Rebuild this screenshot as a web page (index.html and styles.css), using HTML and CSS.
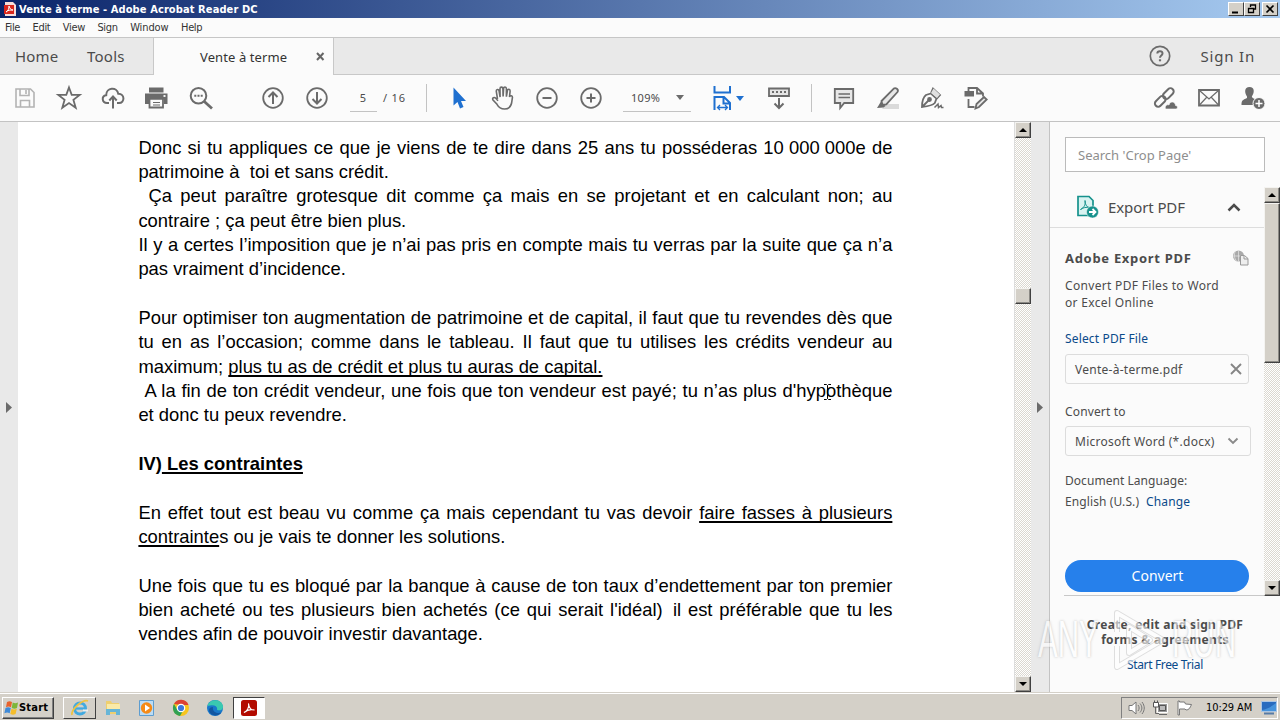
FILE: index.html
```html
<!DOCTYPE html>
<html lang="en">
<head>
    <meta charset="UTF-8">
    <meta name="viewport" content="width=device-width, initial-scale=1.0">
    <title>Vente à terme - Adobe Acrobat Reader DC</title>
    <link rel="stylesheet" href="styles.css">
</head>
<body>
    <div class="window">

        <!-- Title bar -->
        <div class="title-bar">
            <svg class="title-icon" width="12" height="14" viewBox="0 0 12 14"><path d="M1 0h8l3 3v11H1z" fill="#f7dedb"/><path d="M0 3h10v9H0z" fill="#d9271d"/><path d="M2 10c2-1 3-3 3-6 1 3 2 4 4 4-3 0-5 0-7 2z" fill="none" stroke="#fff"/></svg>
            <span class="title-text">Vente à terme - Adobe Acrobat Reader DC</span>
            <div class="win-buttons">
                <span class="win-btn"><svg width="14" height="12"><path d="M3 9.500h6" stroke="#000" stroke-width="2"/></svg></span>
                <span class="win-btn"><svg width="14" height="12"><path d="M5.500 4V2h5v4H9M5 2h6" fill="none" stroke="#000" stroke-width="1.300"/><path d="M3.500 5.500h5v4h-5zM3 5.500h6" fill="none" stroke="#000" stroke-width="1.300"/></svg></span>
                <span class="win-btn close"><svg width="14" height="12"><path d="M3.500 2.500l7 7M10.500 2.500l-7 7" stroke="#000" stroke-width="1.700"/></svg></span>
            </div>
        </div>

        <div class="menu-bar">
            <span>File</span><span>Edit</span><span>View</span><span>Sign</span><span class="wide">Window</span><span>Help</span>
        </div>

        <!-- Tabs -->
        <div class="tab-bar">
            <div class="tab-left">
                <span class="tab-home">Home</span>
                <span class="tab-tools">Tools</span>
            </div>
            <div class="tab-active">
                <span class="tab-name">Vente à terme</span>
                <svg width="9" height="9" viewBox="0 0 9 9"><path d="M1 1l6.500 7M7.500 1L1 8" stroke="#666" stroke-width="2"/></svg>
            </div>
            <div class="tab-right">
                <svg width="22" height="22" viewBox="0 0 22 22" fill="none" stroke="#6b6b6b" stroke-width="1.700"><circle cx="11" cy="11" r="9.700"/><path d="M8.300 8.500c.2-3.300 5.500-3 5.200.2-.2 1.900-2.500 2-2.500 4.100" stroke-width="2"/><path d="M11 14.300v2" stroke-width="2.200"/></svg>
                <span class="sign-in">Sign In</span>
            </div>
        </div>

        <!-- Toolbar -->
        <div class="toolbar">
            <span class="tool light"><svg viewBox="0 0 28 28"><path d="M5 5h14.500l3.500 3.500V23H5zM9 5v6.500h9V5M9.500 23v-6.500h9V23M15 6v4" stroke-width="1.600"/></svg></span>
            <span class="tool"><svg viewBox="0 0 28 28"><path d="M14 3.500l2.700 7.400h8l-6.300 4.900 2.300 7.900-6.700-4.700-6.700 4.700 2.300-7.900-6.300-4.900h8z"/></svg></span>
            <span class="tool"><svg viewBox="0 0 28 28"><path d="M10 19H8c-5 0-6-7-.8-7.800C7 3.500 18 2.300 19.300 9.800 26 9.500 26 19 20 19h-2M14 24.500V13M10.300 16.500L14 12.500l3.700 4" stroke-width="2"/></svg></span>
            <span class="tool"><svg viewBox="0 0 28 28"><path d="M6 3.500h14.500v5H6z" fill="#6b6b6b" stroke="none"/><path d="M2 9.500h22.500V20H21v-4.500H6V20H2z" fill="#6b6b6b" stroke="none"/><path d="M6.500 14.800h13.500v8.700H6.500z" fill="#fbfbfb"/><path d="M10 18.500h7M10 21h7" stroke-width="1"/><path d="M20.500 12h2" stroke="#fff"/></svg></span>
            <span class="tool"><svg viewBox="0 0 28 28"><circle cx="11.500" cy="11.800" r="7.800" stroke-width="2"/><path d="M17 17.300l8 7.200" stroke-width="2.800"/><path d="M7.300 11.800h2M10.500 11.800h2M13.700 11.800h2" stroke-width="1.900"/></svg></span>
            <span class="gap"></span>
            <span class="tool"><svg viewBox="0 0 28 28"><circle cx="14" cy="14" r="9.800"/><path d="M14 20V9M9.500 13L14 8.500l4.500 4.500" stroke-width="2"/></svg></span>
            <span class="tool"><svg viewBox="0 0 28 28"><circle cx="14" cy="14" r="9.800"/><path d="M14 8v11M9.500 15l4.500 4.500 4.500-4.500" stroke-width="2"/></svg></span>
            <span class="page-box"><span class="page-num">5</span><span class="page-total">/ 16</span></span>
            <span class="divider"></span>
            <span class="tool"><svg viewBox="0 0 28 28"><path d="M8.500 3.500v18l4-3.500 2.500 6.500 3.500-1.500-2.500-6h5z" fill="#1f70d0" stroke="none"/></svg></span>
            <span class="tool"><svg viewBox="0 0 28 28"><path d="M8.500 15L7.300 7.500c-.3-2.400 2.400-2.700 2.800-.5l1 6L11 4.800c0-2.200 2.800-2.200 2.900 0l.2 7.700.5-8c.1-2.100 2.800-2 2.800.2v8l1-6c.4-2.200 2.800-1.700 2.700.4l-.6 5.900c.6-2 3.200-1.500 2.900.7L22.600 19c-.8 4-3.500 6-7.100 6-4 0-6-2-7.500-4.700L4 16c-1.200-2.200 1.300-3.400 2.800-1.700l2.200 2.500" stroke-width="1.600"/></svg></span>
            <span class="tool"><svg viewBox="0 0 28 28"><circle cx="14" cy="14" r="9.800"/><path d="M9.500 14h9" stroke-width="2"/></svg></span>
            <span class="tool"><svg viewBox="0 0 28 28"><circle cx="14" cy="14" r="9.800"/><path d="M9.500 14h9M14 9.500v9" stroke-width="2"/></svg></span>
            <span class="zoom-box"><span>109%</span><i class="caret"></i></span>
            <span class="fit-box"><svg viewBox="0 0 28 28" fill="none" stroke="#1f70d0" stroke-width="2"><path d="M6.500 2v6.500h15.500V2M6.500 26V13h9.500l6 6V26M15.500 13v6.500h7"/><path d="M9.500 23.500h10M12 21l-2.500 2.500L12 26M17 21l2.500 2.500L17 26" stroke-width="1.300"/></svg><i class="caret blue"></i></span>
            <span class="tool"><svg viewBox="0 0 28 28"><path d="M4 4.500h20v7.500H4z" fill="#e4e4e4"/><path d="M7 8h2M11 8h2M15 8h2M19 8h2" stroke-width="2"/><path d="M14 14v10M9.500 19.500L14 24l4.500-4.500" stroke-width="2"/></svg></span>
            <span class="divider second"></span>
            <span class="tool"><svg viewBox="0 0 28 28"><path d="M4.800 5h18.400v14h-9l-4 5v-5H4.800z" fill="#e7e7e7"/><path d="M8.500 10h11.500M8.500 13.500h11.500" stroke-width="1.300"/></svg></span>
            <span class="tool"><svg viewBox="0 0 28 28"><path d="M12 20h13v5H8z" fill="#dadada" stroke="none"/><path d="M7.500 17L19.500 4.800c2.200-1.800 5.500.8 4 3.200L12.300 20.300l-4 .7z" fill="#e7e7e7"/><path d="M7 17.500l4.500 4.500-2 1.500-6.500.5z" fill="#6b6b6b" stroke="none"/></svg></span>
            <span class="tool"><svg viewBox="0 0 28 28"><path d="M4 23c0-5 .7-9.500 4-12l5-1.500 5.500 5-1.700 4.500C14 22 8.500 22.500 4 23zM13 9l2-4.500L22 11l-3.500 4M4.500 22.500l6-6"/><path d="M15.500 4.500l6.500 6-3 3.500-6-5z" fill="#e0e0e0" stroke="none"/><circle cx="11.500" cy="15.500" r="1.500" fill="#6b6b6b"/><path d="M16.500 23.500l3.500-3.500.5 3.500 2.500-2 .5 2h2" stroke-width="1.500"/></svg></span>
            <span class="tool"><svg viewBox="0 0 28 28"><path d="M2.500 7h9.500v5.500H2.500z" fill="#6b6b6b" stroke="none"/><path d="M6.500 7V4H15l6 5.500v3M15 4v5.500h6M6.500 15v8h6"/><path d="M13.500 24.500l1-4.500 7.500-7 2.700 2.500-7.700 7.500z" fill="#e7e7e7"/></svg></span>

            <div class="tools-right">
                <span class="tool"><svg viewBox="0 0 28 28"><g stroke-width="2"><rect x="11.500" y="6" width="12.500" height="6.500" rx="3.200" transform="rotate(-45 18 10)"/><rect x="3" y="13.500" width="12.500" height="6.500" rx="3.200" transform="rotate(-45 10 17)"/></g><path d="M14.500 25c-1-3 1.500-5 3.500-4 1-4.500 6.500-3.500 6.500.5 2.500 0 2.500 3.500.5 3.500z" fill="#6b6b6b" stroke="#fbfbfb" stroke-width=".6"/></svg></span>
                <span class="tool"><svg viewBox="0 0 28 28"><path d="M4 6h20v15.500H4z"/><path d="M4.500 6.500L14 15l9.500-8.500M4.500 21l7-7.500M23.500 21l-7-7.500" stroke-width="1.200"/></svg></span>
                <span class="tool"><svg viewBox="0 0 28 28"><path d="M10.500 3c5.500 0 5 6 2.300 9.500.5 2 3 2 4.200 3L14 21H2.500c0-4.500 1-5 5.500-7V12.500C5.500 9 5 3 10.500 3z" fill="#6b6b6b" stroke="none"/><circle cx="20" cy="19.500" r="6" fill="#6b6b6b" stroke="#fbfbfb" stroke-width="1"/><path d="M20 16v7M16.500 19.500h7" stroke="#fff" stroke-width="1.500"/></svg></span>
            </div>
        </div>

        <!-- Document and side panel -->
        <div class="content">
            <div class="strip strip-left"><svg width="6" height="11"><path d="M0 0l6 5.500L0 11z" fill="#6b6b6b"/></svg></div>

            <div class="document">
                <div class="line full">Donc si tu appliques ce que je viens de te dire dans 25 ans tu posséderas <span class="amount">10 000 000e</span> de</div>
                <div class="line">patrimoine à&nbsp; toi et sans crédit.</div>
                <div class="line full"><span class="indent"></span>Ça peut paraître grotesque dit comme ça mais en se projetant et en calculant non; au</div>
                <div class="line">contraire ; ça peut être bien plus.</div>
                <div class="line full">Il y a certes l’imposition que je n’ai pas pris en compte mais tu verras par la suite que ça n’a</div>
                <div class="line">pas vraiment d’incidence.</div>
                <div class="line"></div>
                <div class="line full">Pour optimiser ton augmentation de patrimoine et de capital, il faut que tu revendes dès que</div>
                <div class="line full">tu en as l’occasion; comme dans le tableau. Il faut que tu utilises les crédits vendeur au</div>
                <div class="line">maximum; <u>plus tu as de crédit et plus tu auras de capital.</u></div>
                <div class="line full"><span class="indent short"></span>A la fin de ton crédit vendeur, une fois que ton vendeur est payé; tu n’as plus d'hyp<span class="cursor-spot"><svg class="cursor" width="9" height="16"><path d="M1 .5h2.500l1 1 1-1H8M4.500 1.500v13M1 15.500h2.500l1-1 1 1H8" fill="none" stroke="#000"/></svg></span>othèque</div>
                <div class="line">et donc tu peux revendre.</div>
                <div class="line"></div>
                <div class="line heading">IV)<u> Les contraintes</u></div>
                <div class="line"></div>
                <div class="line full">En effet tout est beau vu comme ça mais cependant tu vas devoir <u>faire fasses à plusieurs</u></div>
                <div class="line"><u>contrainte</u>s ou je vais te donner les solutions.</div>
                <div class="line"></div>
                <div class="line full">Une fois que tu es bloqué par la banque à cause de ton taux d’endettement par ton premier</div>
                <div class="line full">bien acheté ou tes plusieurs bien achetés (ce qui serait <span class="amount">l'idéal)&nbsp; il</span> est préférable que tu les</div>
                <div class="line">vendes afin de pouvoir investir davantage.</div>
            </div>

            <div class="scrollbar doc-scroll">
                <span class="sb-btn"><i class="up"></i></span>
                <span class="sb-thumb"></span>
                <span class="sb-btn"><i class="down"></i></span>
            </div>

            <div class="strip strip-right"><svg width="6" height="11"><path d="M0 0l6 5.500L0 11z" fill="#6b6b6b"/></svg></div>

            <div class="side-panel">
                <div class="search">Search 'Crop Page'</div>
                <div class="panel-area">
                    <div class="panel-main">
                        <div class="panel-head">
                            <svg width="24" height="24" viewBox="0 0 24 24"><path d="M3 1.500h11l4 4V20.500H3z" fill="#d8f3f1" stroke="#16918c" stroke-width="1.700"/><path d="M5.500 14.500c4-2 5-5 4.500-9C10.500 10.500 12 12.500 15 12.500c-4-.5-7 0-9.500 2z" fill="none" stroke="#16918c"/><circle cx="17.500" cy="17" r="6" fill="#16918c" stroke="#fbfbfb" stroke-width=".5"/><path d="M14 17h6M17.500 14l3 3-3 3" fill="none" stroke="#fff" stroke-width="1.800"/></svg>
                            <span class="panel-title">Export PDF</span>
                            <svg class="chevron" width="14" height="9"><path d="M1.500 7.500L7 2l5.500 5.500" fill="none" stroke="#4b4b4b" stroke-width="2.500"/></svg>
                        </div>
                        <div class="panel-body">
                            <div class="export-title"><span>Adobe Export PDF</span>
                                <svg width="17" height="16" viewBox="0 0 17 16"><circle cx="6.500" cy="6" r="5.500" fill="#aaa"/><path d="M1 6h11M6.500.5v11M3.500.8c-2 4-1 8 1 10" stroke="#e8e8e8" fill="none" stroke-width=".7"/><path d="M8.500 5.500h4l3.500 3V15H8.500z" fill="#eee" stroke="#999"/><path d="M12 6v3h4" fill="none" stroke="#999"/></svg>
                            </div>
                            <p class="export-text">Convert PDF Files to Word<br>or Excel Online</p>
                            <div class="link select-link">Select PDF File</div>
                            <div class="field file-field"><span>Vente-à-terme.pdf</span><svg width="12" height="12"><path d="M1 1l10 10M11 1L1 11" stroke="#858585" stroke-width="1.900"/></svg></div>
                            <div class="label">Convert to</div>
                            <div class="field format-field"><span>Microsoft Word (*.docx)</span><svg width="12" height="8"><path d="M1.500 1.500L6 6l4.500-4.500" fill="none" stroke="#8a8a8a" stroke-width="1.900"/></svg></div>
                            <div class="lang-title">Document Language:</div>
                            <div class="lang"><span>English (U.S.)</span><span class="link">Change</span></div>
                            <div class="convert-btn">Convert</div>
                        </div>
                    </div>
                    <div class="scrollbar panel-scroll">
                        <span class="sb-btn"><i class="up"></i></span>
                        <span class="sb-thumb"></span>
                        <span class="sb-btn"><i class="down"></i></span>
                    </div>
                </div>
                <div class="promo">
                    <b>Create, edit and sign PDF<br>forms &amp; agreements</b>
                    <span class="link">Start Free Trial</span>
                </div>
            </div>
        </div>

        <!-- Taskbar -->
        <div class="taskbar">
            <div class="start-btn">
                <svg width="15" height="16" viewBox="0 0 15 16"><path d="M3 2c2-1 3-1 5 0L7 7.300c-2-1-3-1-5 0z" fill="#e8622c"/><path d="M8.700 2.500c2 1 3 1 5.300 0L13 8c-2 1-3 1-5.300 0z" fill="#7db63a"/><path d="M1.500 8c2-1 3-1 5.300 0L5.700 13.300c-2-1-3-1-5.300 0z" fill="#3f8ad8"/><path d="M7.500 8.700c2 1 3 1 5.300 0l-1.200 5.300c-2 1-3 1-5.300 0z" fill="#f5bd2b"/></svg>
                <span>Start</span>
            </div>
            <div class="task raised"><svg width="20" height="20" viewBox="0 0 20 20"><circle cx="10" cy="10.500" r="5.500" fill="none" stroke="#42aae0" stroke-width="3"/><path d="M5 10.500h10" stroke="#42aae0" stroke-width="2.300"/><path d="M13 12.500h5" stroke="#eee" stroke-width="2"/><path d="M2 17C1 11 13 1 18 3" fill="none" stroke="#efc341" stroke-width="1.700"/></svg></div>
            <div class="task"><svg width="18" height="18" viewBox="0 0 18 18"><path d="M2 2h5l1 2h7v11H2z" fill="#eecf70"/><path d="M3 5h13v8H3z" fill="#faeaa8"/><path d="M2 10h14v6h-4v-3H6v3H2z" fill="#67b5d7"/></svg></div>
            <div class="task"><svg width="18" height="18" viewBox="0 0 18 18"><path d="M1.500 1.500h14v15h-14z" fill="#bcdcf4" stroke="#5d9dd0"/><circle cx="8.500" cy="9" r="5.700" fill="#f58a16"/><path d="M7 5.500v7l5-3.500z" fill="#fff"/></svg></div>
            <div class="task"><svg width="18" height="18" viewBox="0 0 18 18"><circle cx="9" cy="9" r="8" fill="#f7c51e"/><path d="M2 5a8 8 0 0 1 14.500 1H9z" fill="#dc4234"/><path d="M2 5a8 8 0 0 0 6 12l3.500-6L5.500 11z" fill="#31a153"/><circle cx="9" cy="9" r="3.700" fill="#3c78dc" stroke="#fff" stroke-width="1.200"/></svg></div>
            <div class="task"><svg width="18" height="18" viewBox="0 0 18 18"><circle cx="9" cy="9" r="8" fill="#1878cb"/><path d="M1.500 7C3 0 15-1 17 7c.5 4-3 5-6 4 1-3-2-6-9.500-4z" fill="#3ac9b0"/><path d="M7 8c-1 5 4 7 8.500 5.500C11 19 3 16 3 11c0-2 2-3 4-3z" fill="#1256a0"/></svg></div>
            <div class="task pressed"><svg width="16" height="16" viewBox="0 0 16 16"><rect width="16" height="16" rx="2.500" fill="#b30b00"/><path d="M3 12.500c3-1 5.500-5 4.500-9C8 8 10 10.500 13.500 10 9.500 9 6 10 3 12.500z" fill="none" stroke="#fff" stroke-width="1.100"/></svg></div>

            <div class="tray">
                <svg width="17" height="16" viewBox="0 0 17 16" fill="none" stroke="#777"><path d="M1 5.500h3L8 2v12l-4-3.500H1z" fill="#fff"/><path d="M10 5c1.500 2 1.500 4 0 6M12 3.500c2.500 3 2.500 6 0 9M14 2c3 4 3 8 0 12"/></svg>
                <svg width="17" height="16" viewBox="0 0 17 16"><path d="M5.500 3.500h10v9h-10z" fill="#999" stroke="#fff"/><path d="M7.500 5.500h6v5h-6z" fill="#bbb" stroke="#555"/><path d="M7 14.500h8M3.500 7v6.500H7" fill="none" stroke="#666"/><path d="M1.500 2.500h5V7h-5zM2.500.5v2M5.500.5v2" fill="#fff" stroke="#555"/></svg>
                <svg width="17" height="16" viewBox="0 0 17 16" fill="#fff" stroke="#777"><path d="M2 1v14h1.500V9H9l1 1c3 0 4-2 5.500-5.500L9.500 4 8.500 2H3.500V1z"/></svg>
                <span class="clock">10:29 AM</span>
                <svg class="desktop-icon" width="16" height="14" viewBox="0 0 16 14"><path d="M.5.500h15v10H.5z" fill="#286bbf" stroke="#aac5e4"/><path d="M1 9c5-1 9-3 14-7v8H1z" fill="#4693dc"/><path d="M3 12.500h10" stroke="#567ba6" stroke-width="2"/></svg>
            </div>
        </div>

        <div class="watermark">
            <span class="wm-text"><span>ANY</span></span>
            <svg width="60" height="64" viewBox="0 0 60 64" fill="none" stroke-linejoin="round"><path d="M9 24V5l46 27L9 59V38M21 19v26l21-13z" stroke="#ccc" stroke-width="6"/><path d="M9 24V5l46 27L9 59V38M21 19v26l21-13z" stroke="#fff" stroke-width="4"/></svg>
            <span class="wm-text"><span>RUN</span></span>
        </div>
    </div>
</body>
</html>
```
FILE: styles.css
```css
* {
    box-sizing: border-box;
}

body {
    margin: 0;
    font-family: "Noto Sans", "Open Sans", sans-serif;
    color: #4b4b4b;
    background: #fff;
}

svg {
    display: block;
    flex: none;
}

.window {
    position: relative;
    width: 1280px;
    height: 720px;
    overflow: hidden;
    display: flex;
    flex-direction: column;
    white-space: nowrap;
}

/* Title bar */
.title-bar {
    height: 18px;
    flex: none;
    display: flex;
    align-items: center;
    padding: 0 2px 0 4px;
    background: linear-gradient(90deg, #0a246a, #a6caf0);
}

.title-text {
    margin-left: 3px;
    color: #fff;
    font: bold 11px "DejaVu Sans Condensed", "DejaVu Sans", sans-serif;
    letter-spacing: 0.1px;
}

.win-buttons {
    margin-left: auto;
    display: flex;
}

.win-btn {
    width: 16px;
    height: 14px;
    background: #d4d0c8;
    border: 1px solid;
    border-color: #fff #404040 #404040 #fff;
}

.win-btn.close {
    margin-left: 2px;
}

.menu-bar {
    height: 20px;
    flex: none;
    display: flex;
    align-items: center;
    gap: 12.5px;
    padding-left: 5px;
    background: #fbfbfb;
    border-bottom: 1px solid #c6c6c6;
    font: 11px/20px "DejaVu Sans Condensed", "DejaVu Sans", sans-serif;
    letter-spacing: -0.35px;
    color: #333;
}

.menu-bar .wide {
    letter-spacing: -0.1px;
}

/* Tabs */
.tab-bar {
    height: 37px;
    flex: none;
    display: flex;
    background: #fbfbfb;
}

.tab-left {
    width: 154px;
    padding: 7px 0 0 15px;
    background: #e9e9e9;
    border-right: 1px solid #c8c8c8;
    border-bottom: 1px solid #c8c8c8;
    font-size: 15px;
    line-height: 22px;
    letter-spacing: 0.2px;
}

.tab-tools {
    margin-left: 24.5px;
}

.tab-active {
    width: 179px;
    display: flex;
    align-items: center;
    padding-left: 46px;
    font-size: 13px;
    letter-spacing: 0.1px;
    color: #333;
}

.tab-active svg {
    margin-left: auto;
    margin-right: 8px;
}

.tab-right {
    flex: 1;
    display: flex;
    align-items: center;
    justify-content: flex-end;
    gap: 30px;
    padding-right: 25px;
    background: #e9e9e9;
    border-left: 1px solid #c8c8c8;
    border-bottom: 1px solid #c8c8c8;
    font-size: 15px;
    letter-spacing: 0.8px;
}

/* Toolbar */
.toolbar {
    height: 47px;
    flex: none;
    display: flex;
    align-items: center;
    padding: 0 5px 0 3px;
    background: #fbfbfb;
    border-bottom: 1px solid #c3c3c3;
}

.tool {
    width: 44px;
    display: flex;
    justify-content: center;
}

.tool svg {
    width: 28px;
    height: 28px;
    fill: none;
    stroke: #6b6b6b;
    stroke-width: 1.8;
}

.tool.light svg {
    stroke: #b3b3b3;
}

.gap {
    width: 28px;
}

.page-box {
    width: 87px;
    display: flex;
    padding-left: 11px;
    font-size: 11px;
    line-height: 26px;
}

.page-num {
    width: 27px;
    padding-right: 1px;
    text-align: center;
    border-bottom: 1px solid #c3c3c3;
}

.page-total {
    margin-left: 6px;
    letter-spacing: 0.8px;
}

.divider {
    width: 1px;
    height: 28px;
    margin-right: 10px;
    background: #c3c3c3;
}

.divider.second {
    margin-left: 10px;
}

.zoom-box {
    width: 68px;
    height: 27px;
    margin: 0 10px;
    display: flex;
    align-items: center;
    justify-content: space-between;
    padding: 0 7px 0 8px;
    border-bottom: 1px solid #c3c3c3;
    font-size: 11px;
    letter-spacing: 0.3px;
}

.caret {
    border: 4.5px solid transparent;
    border-top: 5px solid #6b6b6b;
    border-bottom: 0;
}

.caret.blue {
    border-top-color: #1f70d0;
}

.fit-box {
    width: 56px;
    display: flex;
    align-items: center;
    padding-left: 7px;
}

.fit-box svg {
    width: 28px;
    height: 28px;
}

.tools-right {
    margin-left: auto;
    display: flex;
}

/* Document */
.content {
    height: 570px;
    flex: none;
    display: flex;
}

.strip {
    background: #e9e9e9;
    display: flex;
    align-items: center;
}

.strip-left {
    width: 18px;
    padding-left: 6px;
}

.strip-right {
    width: 19px;
    padding-left: 6px;
    border-right: 1px solid #c3c3c3;
}

.document {
    width: 996px;
    padding: 13.7px 0 0 120.4px;
    font-family: "Liberation Sans", Arial, sans-serif;
    font-size: 18.4px;
    color: #000;
}

.line {
    width: 754px;
    height: 24.34px;
    line-height: 24.34px;
}

.line.full {
    text-align: justify;
    text-align-last: justify;
    white-space: normal;
}

.line u {
    text-decoration-thickness: 2px;
    text-underline-offset: 2px;
    text-decoration-skip-ink: none;
}

.amount {
    display: inline-block;
    white-space: nowrap;
    text-align-last: left;
}

.heading {
    font-weight: bold;
}

.indent {
    display: inline-block;
    width: 10px;
}

.indent.short {
    width: 6px;
}

.cursor-spot {
    position: relative;
}

.cursor {
    position: absolute;
    left: -3px;
    top: 4px;
}

/* Classic scrollbars */
.scrollbar {
    display: flex;
    flex-direction: column;
    background: repeating-conic-gradient(#fff 0 25%, #dbd8d0 0 50%) 0 0 / 2px 2px;
}

.sb-btn,
.sb-thumb {
    width: 16px;
    height: 16px;
    background: #d4d0c8;
    border: 1px solid;
    border-color: #f4f3f0 #404040 #404040 #f4f3f0;
    box-shadow: inset -1px -1px #8c8a85;
}

.sb-btn {
    display: flex;
    align-items: center;
    justify-content: center;
}

.sb-btn:last-child {
    margin-top: auto;
}

.up,
.down {
    border: 4px solid transparent;
}

.up {
    border-top: 0;
    border-bottom-color: #000;
}

.down {
    border-bottom: 0;
    border-top-color: #000;
}

.doc-scroll {
    width: 17px;
    border-left: 1px solid #ddd;
}

.doc-scroll .sb-thumb {
    margin-top: 150px;
}

/* Side panel */
.side-panel {
    width: 230px;
    background: #fbfbfb;
    font-size: 12px;
    display: flex;
    flex-direction: column;
}

.search {
    width: 200px;
    height: 35px;
    margin: 15px 0 15px 15px;
    padding-left: 12px;
    background: #fff;
    border: 1px solid #bbb;
    font-size: 13px;
    line-height: 34px;
    color: #8e8e8e;
}

.panel-area {
    height: 409px;
    display: flex;
}

.panel-main {
    width: 214px;
}

.panel-head {
    height: 41px;
    display: flex;
    align-items: center;
    padding: 0 23px 0 25px;
    border-bottom: 1px solid #ddd;
}

.panel-title {
    margin-left: 9px;
    font-size: 15px;
    letter-spacing: -0.1px;
}

.chevron {
    margin-left: auto;
}

.panel-body {
    height: 368px;
    margin-left: 14px;
    padding: 20px 0 0 1px;
    border-bottom: 1px solid #c8c8c8;
}

.export-title {
    display: flex;
    align-items: center;
    justify-content: space-between;
    height: 20px;
    padding-right: 15px;
    font-size: 13px;
    font-weight: bold;
    letter-spacing: 0.7px;
}

.export-text {
    margin: 9px 0 0;
    line-height: 17px;
    letter-spacing: 0.32px;
}

.link {
    color: #0a4a8a;
}

.select-link {
    margin-top: 19px;
    line-height: 18px;
    letter-spacing: 0.15px;
}

.field {
    display: flex;
    align-items: center;
    justify-content: space-between;
    width: 184px;
    height: 30px;
    padding: 0 6px 0 9px;
    border: 1px solid #dcdcdc;
    border-radius: 3px;
    letter-spacing: 0.27px;
}

.file-field {
    margin-top: 6px;
}

.label {
    margin-top: 19px;
    line-height: 18px;
    letter-spacing: 0.15px;
}

.format-field {
    width: 186px;
    margin-top: 5px;
    padding-right: 11px;
}

.lang-title {
    margin-top: 16px;
    line-height: 18px;
    letter-spacing: 0.05px;
}

.lang {
    margin-top: 3px;
    line-height: 18px;
    letter-spacing: 0.1px;
}

.lang .link {
    margin-left: 7px;
}

.convert-btn {
    width: 184px;
    height: 32px;
    margin-top: 49px;
    padding-left: 1px;
    border-radius: 16px;
    background: #2680eb;
    color: #fff;
    font-size: 14px;
    line-height: 31px;
    text-align: center;
}

.panel-scroll {
    width: 16px;
}

.panel-scroll .sb-thumb {
    height: 160px;
}

.promo {
    display: flex;
    flex-direction: column;
    align-items: center;
    padding-top: 21px;
    line-height: 15px;
    text-align: center;
    letter-spacing: 0.28px;
}

.promo .link {
    margin-top: 10px;
    letter-spacing: -0.35px;
}

/* Taskbar */
.taskbar {
    height: 28px;
    flex: none;
    display: flex;
    align-items: center;
    padding: 2px 2px 0;
    background: #d4d0c8;
    border-top: 1px solid #d4d0c8;
    box-shadow: inset 0 1px #fff;
    font-family: "DejaVu Sans Condensed", "DejaVu Sans", sans-serif;
    font-size: 11px;
    color: #000;
}

.start-btn {
    width: 52px;
    height: 22px;
    margin-right: 9px;
    padding-left: 1px;
    display: flex;
    align-items: center;
    border: 1px solid;
    border-color: #fff #404040 #404040 #fff;
    box-shadow: inset -1px -1px #808080;
    font-weight: bold;
    letter-spacing: 0.2px;
}

.task {
    width: 34px;
    height: 22px;
    display: flex;
    align-items: center;
    justify-content: center;
}

.raised {
    width: 33px;
    border: 1px solid;
    border-color: #fff #404040 #404040 #fff;
}

.pressed {
    width: 32px;
    margin-left: 1px;
    background: #fff;
    border: 1px solid;
    border-color: #404040 #fff #fff #404040;
}

.tray {
    width: 157px;
    height: 22px;
    margin-left: auto;
    display: flex;
    align-items: center;
    gap: 7px;
    padding-left: 6px;
    border: 1px solid;
    border-color: #808080 #fff #fff #808080;
}

.clock {
    margin-left: 6px;
    letter-spacing: -0.1px;
}

.desktop-icon {
    margin-left: auto;
}

/* Overlaid mark in the corner */
.watermark {
    position: absolute;
    left: 1038px;
    top: 608px;
    display: flex;
    align-items: center;
    font: 51px/64px "Liberation Sans", Arial, sans-serif;
    color: #fff;
    text-shadow: 0 0 3px #999;
    opacity: 0.6;
}

.watermark svg {
    margin: 0 4px 0 8px;
}

.wm-text {
    width: 62px;
}

.wm-text span {
    display: block;
    transform: scaleX(0.58);
    transform-origin: 0 50%;
}
```
